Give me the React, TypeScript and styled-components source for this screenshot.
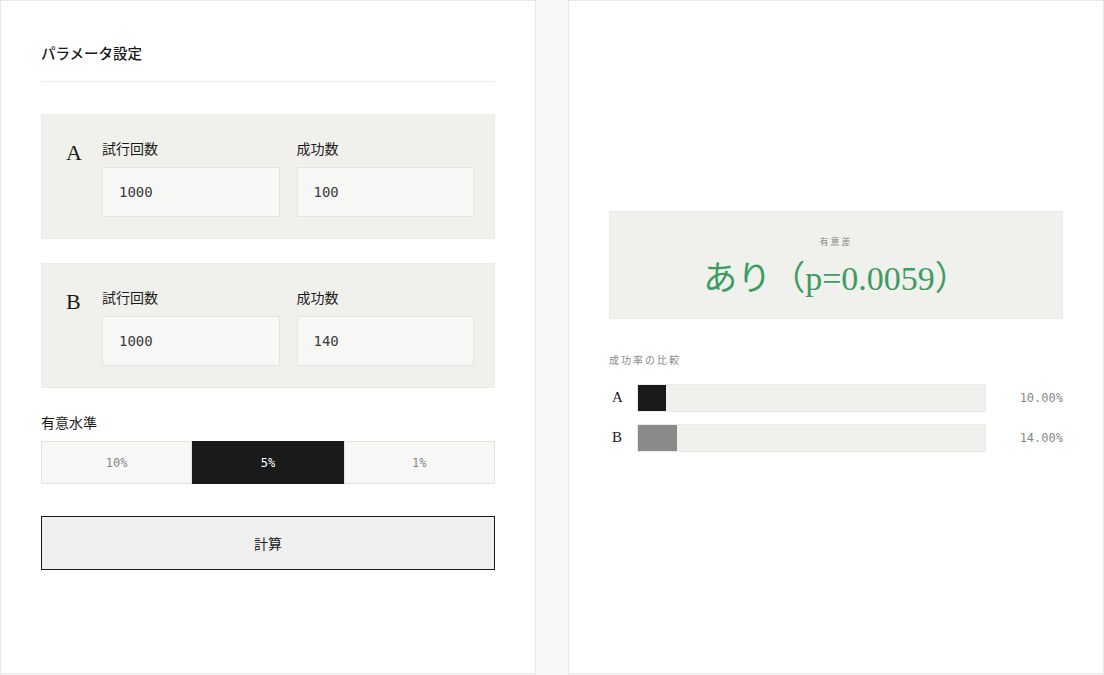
import React, { useState } from "react";
import styled, { createGlobalStyle } from "styled-components";

const GlobalStyle = createGlobalStyle`
  html, body { margin: 0; padding: 0; }
  body {
    background: #f7f7f5;
    font-family: "Noto Sans CJK JP", "Noto Sans", sans-serif;
    color: #1a1a1a;
  }
  * { box-sizing: border-box; }
`;

const SANS = `"Noto Sans CJK JP", "Noto Sans", sans-serif`;
const MONO = `"DejaVu Sans Mono", "Liberation Mono", monospace`;
const SERIF = `"Liberation Serif", "DejaVu Serif", "Noto Sans CJK JP", serif`;

const Layout = styled.div`
  display: grid;
  grid-template-columns: 536px 536px;
  column-gap: 32px;
  height: 675px;
  padding-bottom: 1px;
`;

const Panel = styled.section<{ $center?: boolean }>`
  background: #ffffff;
  border: 1px solid #e8e8e4;
  padding: 40px;
  display: flex;
  flex-direction: column;
  justify-content: ${(p) => (p.$center ? "center" : "flex-start")};
`;

const PanelTitle = styled.h2`
  margin: 0 0 32px;
  padding: 2px 0 18px;
  font-family: ${SANS};
  font-size: 14.5px;
  font-weight: 500;
  line-height: 20px;
  border-bottom: 1px solid #eeeeea;
`;

const Group = styled.div`
  display: grid;
  grid-template-columns: 19px 1fr 1fr;
  column-gap: 17px;
  padding: 23px 20px 21px 24px;
  background: #f0f0ec;
  border: 1px solid #ecece8;
  & + & {
    margin-top: 24px;
  }
`;

const GroupLetter = styled.div`
  font-family: ${SERIF};
  font-size: 22px;
  line-height: 24px;
  padding-top: 3px;
  color: #1a1a1a;
`;

const Field = styled.label`
  display: flex;
  flex-direction: column;
  gap: 9px;
`;

const FieldLabel = styled.span`
  font-family: ${SANS};
  font-size: 14px;
  line-height: 20px;
  color: #1a1a1a;
`;

const Input = styled.input`
  height: 50px;
  width: 100%;
  border: 1px solid #e4e4e0;
  background: #f7f7f5;
  padding: 0 16px;
  font-family: ${MONO};
  font-size: 14px;
  color: #3a3a3a;
  outline: none;
`;

const SectionLabel = styled.div`
  margin-top: 24px;
  font-family: ${SANS};
  font-size: 14px;
  line-height: 20px;
  margin-bottom: 9px;
`;

const Segments = styled.div`
  display: grid;
  grid-template-columns: repeat(3, 1fr);
  height: 43px;
`;

const Segment = styled.button<{ $active: boolean }>`
  margin: 0;
  border: 1px solid ${(p) => (p.$active ? "#1a1a1a" : "#e2e2de")};
  background: ${(p) => (p.$active ? "#1a1a1a" : "#f7f7f5")};
  color: ${(p) => (p.$active ? "#ffffff" : "#888")};
  font-family: ${MONO};
  font-size: 12px;
  cursor: pointer;
`;

const CalcButton = styled.button`
  margin-top: 32px;
  height: 54px;
  width: 100%;
  border: 1px solid #1a1a1a;
  background: #efefef;
  font-family: ${SANS};
  font-size: 14px;
  color: #1a1a1a;
  cursor: pointer;
`;

const ResultBox = styled.div`
  background: #f0f0ec;
  border: 1px solid #ecece8;
  height: 108px;
  display: flex;
  flex-direction: column;
  align-items: center;
  padding-top: 23px;
`;

const ResultCaption = styled.div`
  font-family: ${SANS};
  font-size: 9px;
  letter-spacing: 2px;
  color: #888;
  line-height: 14px;
`;

const ResultValue = styled.div`
  font-family: ${SERIF};
  font-size: 34px;
  font-weight: 400;
  color: #3c9c62;
  line-height: 46px;
  margin-top: 7px;
`;

const CompareLabel = styled.div`
  margin-top: 34px;
  margin-bottom: 17px;
  font-family: ${SANS};
  font-size: 10px;
  letter-spacing: 2px;
  color: #888;
  line-height: 14px;
`;

const Bars = styled.div`
  display: flex;
  flex-direction: column;
  gap: 12px;
  margin-bottom: 12px;
`;

const BarRow = styled.div`
  display: grid;
  grid-template-columns: 28px 1fr 77px;
  align-items: center;
  height: 28px;
`;

const BarLetter = styled.span`
  font-family: ${SERIF};
  font-size: 15px;
  padding-left: 3px;
  color: #1a1a1a;
`;

const Track = styled.div`
  height: 28px;
  background: #f0f0ec;
  border: 1px solid #ebebe7;
  overflow: hidden;
`;

const Fill = styled.div<{ $tone: "dark" | "mid" }>`
  height: 100%;
  background: ${(p) => (p.$tone === "dark" ? "#1a1a1a" : "#8a8a8a")};
`;

const BarValue = styled.span`
  text-align: right;
  font-family: ${MONO};
  font-size: 12px;
  color: #888;
`;

export default function App() {
  const [level, setLevel] = useState("5%");
  const groups = [
    { id: "A", trials: "1000", success: "100" },
    { id: "B", trials: "1000", success: "140" },
  ];
  const rates = [
    { id: "A", rate: 0.1, tone: "dark" as const },
    { id: "B", rate: 0.14, tone: "mid" as const },
  ];
  return (
    <>
      <GlobalStyle />
      <Layout>
        <Panel>
          <PanelTitle>パラメータ設定</PanelTitle>
          {groups.map((g) => (
            <Group key={g.id}>
              <GroupLetter>{g.id}</GroupLetter>
              <Field>
                <FieldLabel>試行回数</FieldLabel>
                <Input defaultValue={g.trials} />
              </Field>
              <Field>
                <FieldLabel>成功数</FieldLabel>
                <Input defaultValue={g.success} />
              </Field>
            </Group>
          ))}
          <SectionLabel>有意水準</SectionLabel>
          <Segments>
            {["10%", "5%", "1%"].map((l) => (
              <Segment key={l} $active={level === l} onClick={() => setLevel(l)}>
                {l}
              </Segment>
            ))}
          </Segments>
          <CalcButton>計算</CalcButton>
        </Panel>
        <Panel $center>
          <ResultBox>
            <ResultCaption>有意差</ResultCaption>
            <ResultValue>あり（p=0.0059）</ResultValue>
          </ResultBox>
          <CompareLabel>成功率の比較</CompareLabel>
          <Bars>
            {rates.map((r) => (
              <BarRow key={r.id}>
                <BarLetter>{r.id}</BarLetter>
                <Track>
                  <Fill $tone={r.tone} style={{ width: `${r.rate * 80}%` }} />
                </Track>
                <BarValue>{(r.rate * 100).toFixed(2)}%</BarValue>
              </BarRow>
            ))}
          </Bars>
        </Panel>
      </Layout>
    </>
  );
}
